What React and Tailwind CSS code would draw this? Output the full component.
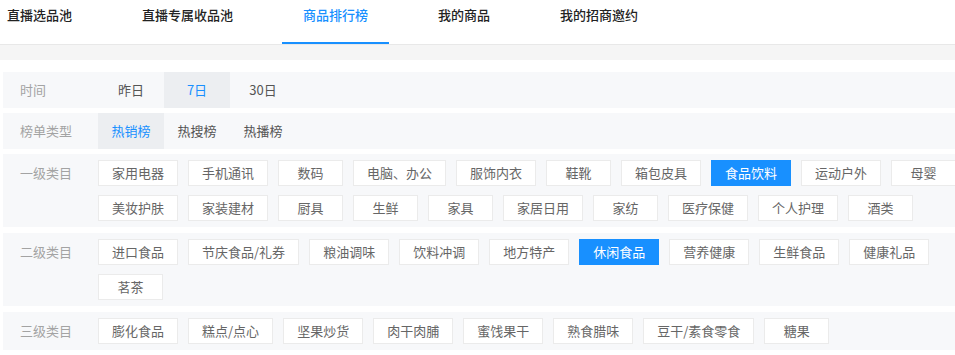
const tabs = ['直播选品池', '直播专属收品池', '商品排行榜', '我的商品', '我的招商邀约'];

const level1 = ['家用电器', '手机通讯', '数码', '电脑、办公', '服饰内衣', '鞋靴', '箱包皮具', '食品饮料', '运动户外', '母婴', '美妆护肤', '家装建材', '厨具', '生鲜', '家具', '家居日用', '家纺', '医疗保健', '个人护理', '酒类'];
const level2 = ['进口食品', '节庆食品/礼券', '粮油调味', '饮料冲调', '地方特产', '休闲食品', '营养健康', '生鲜食品', '健康礼品', '茗茶'];
const level3 = ['膨化食品', '糕点/点心', '坚果炒货', '肉干肉脯', '蜜饯果干', '熟食腊味', '豆干/素食零食', '糖果'];

function Label({ children }) {
    return <div className="w-[95px] shrink-0 pl-[17px] text-[13px] text-[#a3a3a3]">{children}</div>;
}

function ToggleRow({ label, options, active }) {
    return (
        <div className="flex h-[36px] items-center bg-[#f7f8fa] mb-[5px]">
            <Label>{label}</Label>
            <div className="flex h-full">
                {options.map((o) => (
                    <div
                        key={o}
                        className={`flex h-full min-w-[66px] items-center justify-center text-[13px] ${
                            o === active ? 'bg-[#eceef1] text-[#1890ff]' : 'text-[#555]'
                        }`}
                    >
                        {o}
                    </div>
                ))}
            </div>
        </div>
    );
}

function CategoryRow({ label, items, active }) {
    return (
        <div className="flex bg-[#f7f8fa] py-[6px] mb-[6px]">
            <div className="flex h-[26px] items-center">
                <Label>{label}</Label>
            </div>
            <div className="flex w-[890px] flex-wrap gap-x-[10px] gap-y-[9px]">
                {items.map((c) => (
                    <div
                        key={c}
                        className={`flex h-[26px] min-w-[65px] items-center justify-center border px-[13px] text-[13px] ${
                            c === active
                                ? 'border-[#1890ff] bg-[#1890ff] text-white'
                                : 'border-[#ebebeb] bg-white text-[#666]'
                        }`}
                    >
                        {c}
                    </div>
                ))}
            </div>
        </div>
    );
}

export default function App() {
    return (
        <div className="h-[355px] w-full overflow-hidden bg-white font-['Noto_Sans_CJK_SC','Noto_Sans',sans-serif]">
            <div className="w-[990px]">
                <div className="flex h-[45px] gap-[70px] border-b border-[#e8e8e8] pl-[7px]">
                    {tabs.map((t) => (
                        <div
                            key={t}
                            className={`relative pt-[5px] text-[13px] font-medium leading-[20px] ${
                                t === '商品排行榜' ? 'text-[#1890ff]' : 'text-[#222]'
                            }`}
                        >
                            {t}
                            {t === '商品排行榜' && (
                                <div className="absolute bottom-0 left-[-21px] right-[-21px] h-[2px] bg-[#1890ff]" />
                            )}
                        </div>
                    ))}
                </div>
                <div className="h-[15px] bg-[#f5f5f5]" />
                <div className="pl-[3px] pt-[12px]">
                    <ToggleRow label="时间" options={['昨日', '7日', '30日']} active="7日" />
                    <ToggleRow label="榜单类型" options={['热销榜', '热搜榜', '热播榜']} active="热销榜" />
                    <CategoryRow label="一级类目" items={level1} active="食品饮料" />
                    <CategoryRow label="二级类目" items={level2} active="休闲食品" />
                    <CategoryRow label="三级类目" items={level3} />
                </div>
            </div>
        </div>
    );
}
